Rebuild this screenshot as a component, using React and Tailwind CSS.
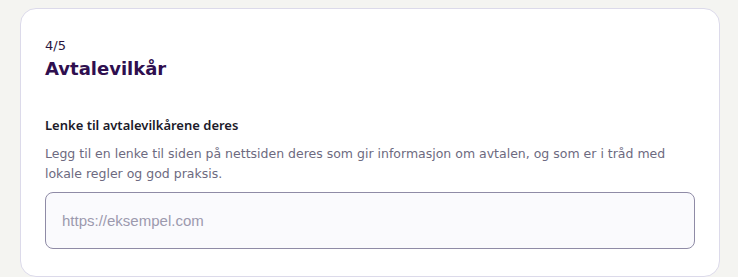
import React from 'react';

const App = () => {
  return (
    <div className="min-h-[277px] w-[738px] bg-[#f4f4f1] pt-[8px] pl-[20px]" style={{ fontFamily: '"DejaVu Sans", sans-serif' }}>
      {/* Card */}
      <div className="w-[700px] rounded-[16px] border border-[#dcdaea] bg-white px-[24px] pt-[27px] pb-[27px]">
        <div className="text-[13px] leading-[20px] text-[#2a1640]">4/5</div>
        <h2 className="text-[18px] font-bold leading-[26px] text-[#2f0f4f]">Avtalevilkår</h2>

        <label
          className="mt-[33px] block text-[13px] font-semibold leading-[20px] text-[#1c1a2a]"
          style={{ fontFamily: '"Noto Sans", sans-serif' }}
        >
          Lenke til avtalevilkårene deres
        </label>
        <p className="mt-[9px] text-[12.5px] leading-[20px] text-[#6d6a80]">
          Legg til en lenke til siden på nettsiden deres som gir informasjon om avtalen, og som er i tråd med lokale regler og god praksis.
        </p>

        <input
          type="text"
          placeholder="https://eksempel.com"
          className="mt-[8px] block h-[57px] w-[650px] rounded-[8px] border border-[#8f8ba6] bg-[#fafafd] px-[16px] text-[15px] text-[#2a1640] outline-none placeholder:text-[#9c99ae]"
          style={{ fontFamily: '"Liberation Sans", Arial, sans-serif' }}
        />
      </div>
    </div>
  );
};

export default App;
